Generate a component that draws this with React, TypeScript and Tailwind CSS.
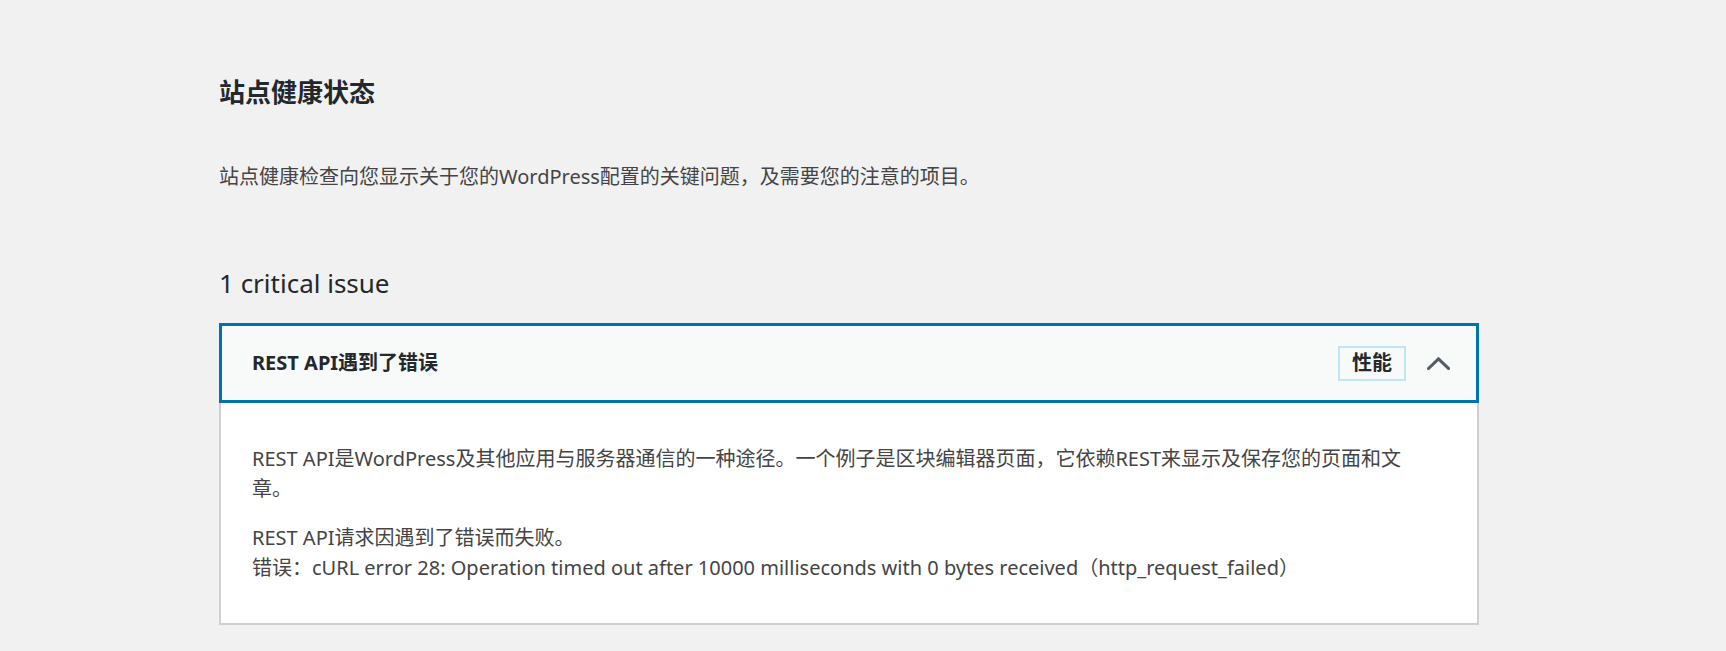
const font = "font-['Noto_Sans','Noto_Sans_CJK_SC',sans-serif]";

function ChevronUp() {
  return (
    <svg width="23" height="13" viewBox="0 0 23 13" fill="none" aria-hidden>
      <polyline points="1.5,11.5 11.5,1.8 21.5,11.5" stroke="#555d66" strokeWidth="3" strokeLinecap="square" />
    </svg>
  );
}

export default function App() {
  return (
    <div className={`min-h-[651px] bg-[#f1f1f1] pl-[219px] pt-[75px] ${font}`}>
      <div className="w-[1260px]">
        <h1 className="text-[26px] font-bold leading-[34px] text-[#23282d]">站点健康状态</h1>
        <p className="mt-[53px] text-[20px] leading-[30px] text-[#444]">
          站点健康检查向您显示关于您的WordPress配置的关键问题，及需要您的注意的项目。
        </p>
        <h2 className="mt-[74px] text-[26px] font-normal leading-[34px] text-[#23282d]">1 critical issue</h2>

        <div className="mt-[23px]">
          <button className="flex h-[80px] w-full items-center justify-between border-[3px] border-[#0073aa] bg-[#f8f9f9] pl-[30px] pr-[26px] text-left">
            <span className="text-[20px] font-bold leading-[28px] text-[#23282d]">REST API遇到了错误</span>
            <span className="flex items-center gap-[21px]">
              <span className="flex h-[35px] items-center border-2 border-[#bfe7f3] px-[12px] text-[20px] font-bold text-[#23282d]">
                性能
              </span>
              <ChevronUp />
            </span>
          </button>
          <div className="border-x-2 border-b-2 border-[#ccd0d4] bg-white pl-[31px] pr-[58px] pt-[41px] pb-[40px] text-[20px] leading-[30px] text-[#444]">
            <p>
              REST API是WordPress及其他应用与服务器通信的一种途径。一个例子是区块编辑器页面，它依赖REST来显示及保存您的页面和文章。
            </p>
            <p className="mt-[19px]">
              REST API请求因遇到了错误而失败。
              <br />
              错误：cURL error 28: Operation timed out after 10000 milliseconds with 0 bytes received（http_request_failed）
            </p>
          </div>
        </div>
      </div>
    </div>
  );
}
